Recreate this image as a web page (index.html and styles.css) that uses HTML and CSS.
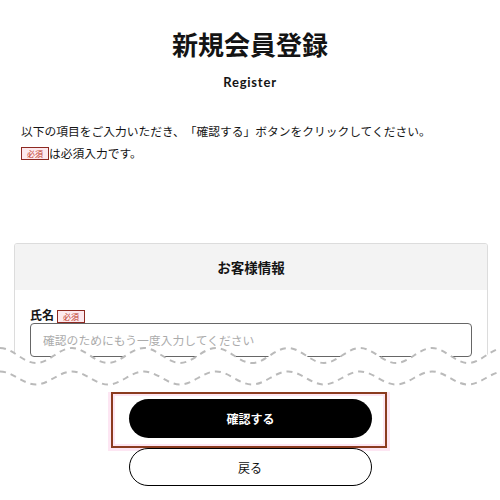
FILE: index.html
```html
<!DOCTYPE html>
<html lang="ja">
<head>
<meta charset="utf-8">
<title>新規会員登録</title>
<link rel="stylesheet" href="styles.css">
</head>
<body>
<header class="page-head">
  <h1 class="title">新規会員登録</h1>
  <p class="subtitle">Register</p>
</header>
<div class="intro">
  <p class="intro-line">以下の項目をご入力いただき、「確認する」ボタンをクリックしてください。</p>
  <p class="intro-line"><span class="badge">必須</span>は必須入力です。</p>
</div>
<section class="card">
  <div class="card-head">お客様情報</div>
  <div class="card-body">
    <label class="field-label">氏名<span class="badge">必須</span></label>
    <input class="input" type="text" placeholder="確認のためにもう一度入力してください">
  </div>
</section>
<svg class="cut" width="500" height="52" viewBox="0 0 500 52" aria-hidden="true">
  <path class="cut-fill" d="M0 8 C13 8 23 23 36 23 S59 8 72 8 S95 23 108 23 S131 8 144 8 S167 23 180 23 S203 8 216 8 S239 23 252 23 S275 8 288 8 S311 23 324 23 S347 8 360 8 S383 23 396 23 S419 8 432 8 S455 23 468 23 S491 8 504 8 L504 52 L0 52 Z"/>
  <path class="cut-line" d="M0 8 C13 8 23 23 36 23 S59 8 72 8 S95 23 108 23 S131 8 144 8 S167 23 180 23 S203 8 216 8 S239 23 252 23 S275 8 288 8 S311 23 324 23 S347 8 360 8 S383 23 396 23 S419 8 432 8 S455 23 468 23 S491 8 504 8"/>
  <path class="cut-line" d="M0 31.5 C13 31.5 23 44.5 36 44.5 S59 31.5 72 31.5 S95 44.5 108 44.5 S131 31.5 144 31.5 S167 44.5 180 44.5 S203 31.5 216 31.5 S239 44.5 252 44.5 S275 31.5 288 31.5 S311 44.5 324 44.5 S347 31.5 360 31.5 S383 44.5 396 44.5 S419 31.5 432 31.5 S455 44.5 468 44.5 S491 31.5 504 31.5"/>
</svg>
<div class="actions">
  <div class="highlight">
    <button class="btn btn-primary" type="button">確認する</button>
  </div>
  <button class="btn btn-secondary" type="button">戻る</button>
</div>
</body>
</html>
```
FILE: styles.css
```css
html, body {
  margin: 0;
  padding: 0;
  background: #fff;
}
body {
  font-family: "Noto Sans CJK JP", "Noto Sans", sans-serif;
  color: #141414;
  width: 500px;
  overflow: hidden;
  text-spacing-trim: space-all;
}
.page-head {
  text-align: center;
  padding-top: 26px;
}
.title {
  margin: 0;
  font-size: 26px;
  line-height: 36px;
  font-weight: 700;
}
.subtitle {
  margin: 11px 0 0;
  font-family: "Lato", "Noto Sans", sans-serif;
  font-weight: 700;
  font-size: 13px;
  line-height: 18px;
  letter-spacing: 0.06em;
}
.intro {
  margin-top: 29px;
  padding: 0 21px;
}
.intro-line {
  margin: 0;
  font-size: 11.75px;
  line-height: 21.5px;
  white-space: nowrap;
}
.badge {
  display: inline-block;
  font-size: 8px;
  line-height: 11px;
  padding: 0 5px;
  border: 1px solid #8e2a22;
  background: #fde9ee;
  color: #c0392b;
  vertical-align: 1px;
  font-weight: 400;
}
.card {
  margin: 80px 12px 0 14px;
  border: 1px solid #dcdcdc;
  border-radius: 3px;
  overflow: hidden;
}
.card-head {
  height: 46px;
  background: #f3f3f3;
  display: flex;
  align-items: center;
  justify-content: center;
  font-size: 13.5px;
  font-weight: 700;
}
.card-body {
  padding: 16px 15px 12px 15px;
}
.field-label {
  display: flex;
  align-items: flex-end;
  gap: 3px;
  font-size: 12px;
  line-height: 17px;
  font-weight: 700;
}
.input {
  display: block;
  width: 100%;
  box-sizing: border-box;
  height: 34px;
  margin: 0;
  padding: 0 12px 2px;
  border: 1px solid #666;
  border-radius: 4px;
  font-family: "Noto Sans CJK JP", sans-serif;
  font-size: 11.8px;
  color: #222;
  background: #fff;
}
.input::placeholder {
  color: #ababab;
}
.cut {
  display: block;
  position: relative;
  margin-top: -30px;
}
.cut-fill {
  fill: #fff;
}
.cut-line {
  fill: none;
  stroke: #bababa;
  stroke-width: 2;
  stroke-dasharray: 6 5;
}
.actions {
  display: flex;
  flex-direction: column;
  align-items: center;
}
.highlight {
  margin-right: 2px;
  padding: 5px 13px 8px 16px;
  border: 2px solid #8b3b1f;
  box-shadow: 0 0 0 3px #fde6f3, inset 0 0 0 2px #fde6f3;
}
.btn {
  display: flex;
  align-items: center;
  justify-content: center;
  width: 243px;
  margin: 0;
  padding: 0;
  font-family: "Noto Sans CJK JP", sans-serif;
  font-size: 12px;
  cursor: pointer;
}
.btn-primary {
  height: 39px;
  border: none;
  border-radius: 20px;
  background: #000;
  color: #fff;
  font-weight: 700;
}
.btn-secondary {
  height: 38px;
  box-sizing: border-box;
  border: 1px solid #000;
  border-radius: 19px;
  background: #fff;
  color: #111;
  font-weight: 400;
}
```
